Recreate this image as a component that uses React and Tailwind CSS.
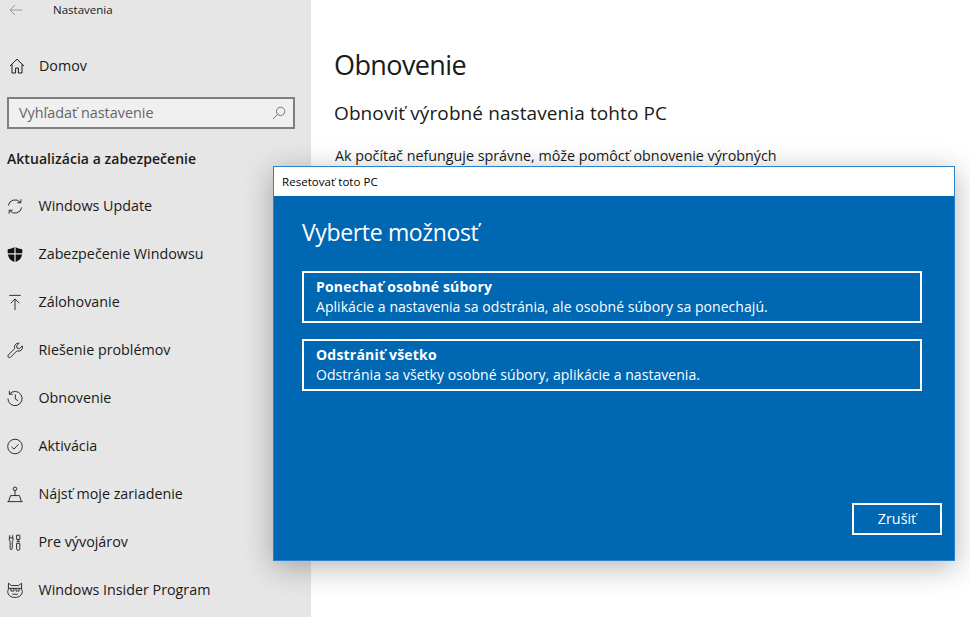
const font = { fontFamily: '"Open Sans", "Noto Sans", sans-serif' };

const stroke = {
    width: 17,
    height: 17,
    viewBox: '0 0 18 18',
    fill: 'none',
    stroke: '#1a1a1a',
    strokeWidth: 1,
};

const icons = {
    update: (
        <svg {...stroke}>
            <path d="M1.4 8A7.7 7.7 0 0 1 15 4.4M16.6 10A7.7 7.7 0 0 1 3 13.6" />
            <path d="M15.6 .8V4.8h-4M2.4 17.2V13.2h4" />
        </svg>
    ),
    shield: (
        <svg width="17" height="17" viewBox="0 0 18 18" fill="#111">
            <path d="M8.3 .6C6.4 2.2 3.4 3 .8 3v4.7h7.5ZM9.7 .6c1.9 1.6 4.9 2.4 7.5 2.4v4.7H9.7ZM1 9.1h7.3v8.3C4.2 16 1.6 13.4 1 9.1ZM9.7 9.1H17c-.6 4.3-3.2 6.9-7.3 8.3Z" />
        </svg>
    ),
    backup: (
        <svg {...stroke}>
            <path d="M2.5 1h13M9 17.5V5M4.2 9.8 9 5l4.8 4.8" />
        </svg>
    ),
    wrench: (
        <svg {...stroke}>
            <path d="M12.8.8a4.5 4.5 0 0 0-4.2 6.1L1.3 14.2a1.8 1.8 0 0 0 2.5 2.5l7.3-7.3a4.5 4.5 0 0 0 6.1-5.6L14 6.9l-2.6-.6-.7-2.6L13.8.9a4.5 4.5 0 0 0-1-.1Z" />
        </svg>
    ),
    history: (
        <svg {...stroke}>
            <path d="M2.8 4A8 8 0 1 1 1 9" />
            <path d="M2.6 .4v3.8h3.8M9.4 4.4V9.6l3.2 2" />
        </svg>
    ),
    check: (
        <svg {...stroke}>
            <circle cx="9" cy="9" r="8.2" />
            <path d="m5 9.4 2.8 2.6 5.2-5.6" />
        </svg>
    ),
    find: (
        <svg {...stroke}>
            <circle cx="9" cy="2.6" r="2" />
            <path d="M9 4.6v5.6M.5 17h17M1.8 17 4 10.2h10l2.2 6.8" />
        </svg>
    ),
    dev: (
        <svg {...stroke}>
            <path d="M3 .8v3M6.4 .8v3M2.6 3.8h4.2v2.4L5.9 8v7.8a1.2 1.2 0 0 1-2.4 0V8l-.9-1.8Z" />
            <path d="M10.8 .8h3.6v4.8h-3.6ZM10.8 8h3.6M12.6 5.6V8M10.8 10h3.6v6a1.8 1.8 0 0 1-3.6 0Z" />
        </svg>
    ),
    insider: (
        <svg {...stroke}>
            <path d="M1.6.8 5 3.4h8L16.4.8v6.6c0 .9.8 1.4.8 2.6 0 4.4-3.6 6.8-8.2 6.8S.8 14.4.8 10c0-1.2.8-1.7.8-2.6Z" />
            <path d="M2 6.6h14M4.4 6.6v3h3.4v-3M10.2 6.6v3h3.4v-3M6 13.2h6" />
        </svg>
    ),
};

const navItems = [
    { icon: 'update', label: 'Windows Update' },
    { icon: 'shield', label: 'Zabezpečenie Windowsu' },
    { icon: 'backup', label: 'Zálohovanie' },
    { icon: 'wrench', label: 'Riešenie problémov' },
    { icon: 'history', label: 'Obnovenie' },
    { icon: 'check', label: 'Aktivácia' },
    { icon: 'find', label: 'Nájsť moje zariadenie' },
    { icon: 'dev', label: 'Pre vývojárov' },
    { icon: 'insider', label: 'Windows Insider Program' },
];

const options = [
    { title: 'Ponechať osobné súbory', text: 'Aplikácie a nastavenia sa odstránia, ale osobné súbory sa ponechajú.' },
    { title: 'Odstrániť všetko', text: 'Odstránia sa všetky osobné súbory, aplikácie a nastavenia.' },
];

export default function App() {
    return (
        <div style={font} className="relative flex h-[617px] w-[970px] overflow-hidden bg-white text-[#1a1a1a]">
            <aside className="h-full w-[311px] shrink-0 bg-[#e6e6e6]">
                <div className="flex h-[20px] items-center pl-[9px]">
                    <svg width="14" height="12" viewBox="0 0 14 12" fill="none" stroke="#9a9a9a" strokeWidth="1">
                        <path d="M13 6H1M6 1 1 6l5 5" />
                    </svg>
                    <span className="ml-[30px] text-[11.5px]">Nastavenia</span>
                </div>

                <div className="mt-[22px] flex h-[48px] items-center pl-[9px]">
                    <svg {...stroke} width="16" height="16" viewBox="0 0 16 16">
                        <path d="M1 8 8 1.2 15 8M3 6.4V15h3.6v-5h2.8v5H13V6.4" />
                    </svg>
                    <span className="ml-[14px] text-[14.3px]">Domov</span>
                </div>

                <div className="mx-[7px] mt-[7px] flex h-[32px] w-[288px] items-center justify-between border-2 border-[#7f7f7f] bg-[#f0f0f0] pb-[1px] pl-[10px] pr-[7px]">
                    <span className="text-[14.4px] text-[#666]">Vyhľadať nastavenie</span>
                    <svg className="mt-[1px]" width="14" height="14" viewBox="0 0 14 14" fill="none" stroke="#777" strokeWidth="1">
                        <circle cx="8.6" cy="5.4" r="4.2" />
                        <path d="M5.6 8.4 1 13" />
                    </svg>
                </div>

                <h2 className="ml-[7px] mt-[19px] text-[14px] font-semibold leading-[22px] tracking-[0.05px]">
                    Aktualizácia a zabezpečenie
                </h2>

                <nav className="mt-[12px]">
                    {navItems.map((item) => (
                        <div key={item.label} className="flex h-[48px] items-center pl-[7px]">
                            <span className="flex w-[16px] justify-center">{icons[item.icon]}</span>
                            <span className="ml-[15.5px] text-[14.3px]">{item.label}</span>
                        </div>
                    ))}
                </nav>
            </aside>

            <main className="pl-[23px] pt-[46px]">
                <h1 className="text-[27px] leading-[38px] tracking-[-0.6px]">Obnovenie</h1>
                <h2 className="mt-[15px] text-[19px] leading-[28px] tracking-[0.1px]">Obnoviť výrobné nastavenia tohto PC</h2>
                <p className="ml-[1px] mt-[18px] text-[14.3px] leading-[22px]">Ak počítač nefunguje správne, môže pomôcť obnovenie výrobných</p>
            </main>

            <div className="absolute left-[273px] top-[166px] flex h-[395px] w-[682px] flex-col border border-[#2a83cc] bg-[#0067b3] shadow-[0_6px_28px_rgba(0,0,0,0.3)]">
                <div className="flex h-[29px] shrink-0 items-center bg-white pl-[8px] text-[11.5px] tracking-[0.05px] text-black">
                    Resetovať toto PC
                </div>
                <div className="flex flex-1 flex-col px-[28px] pb-[25px] text-white">
                    <h2 className="mt-[20px] text-[23px] leading-[32px] tracking-[-0.35px]">Vyberte možnosť</h2>
                    <div className="mr-[4px] mt-[23px] flex flex-col gap-[16px]">
                        {options.map((option) => (
                            <div key={option.title} className="flex h-[52px] flex-col justify-center border-2 border-white pl-[12px]">
                                <p className="text-[14px] font-bold leading-[20px] tracking-[0.2px]">{option.title}</p>
                                <p className="text-[14px] leading-[20px] tracking-[0.05px]">{option.text}</p>
                            </div>
                        ))}
                    </div>
                    <div className="mt-auto flex justify-end">
                        <div className="mr-[-15px] flex h-[32px] w-[90px] translate-x-[1px] items-center justify-center border-2 border-white text-[14.3px]">
                            Zrušiť
                        </div>
                    </div>
                </div>
            </div>
        </div>
    );
}
